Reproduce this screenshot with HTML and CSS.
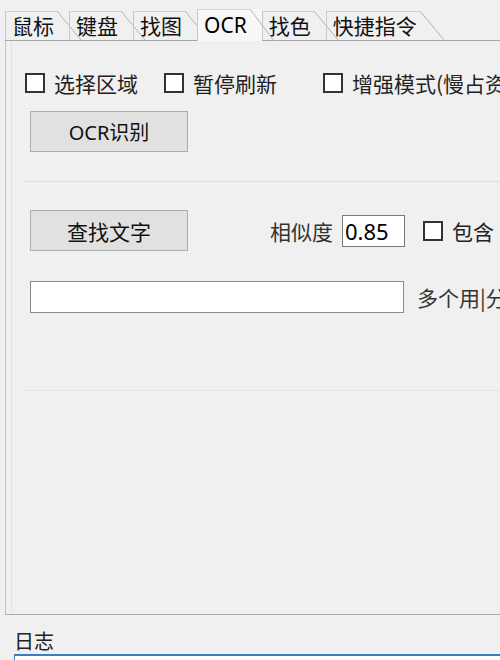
FILE: index.html
```html
<!DOCTYPE html>
<html lang="zh-CN">
<head>
  <meta charset="UTF-8" />
  <title>OCR</title>
  <link rel="stylesheet" href="styles.css">
</head>
<body>
  <div class="window">
    <div class="tabs">
      <div class="tab">鼠标</div>
      <div class="tab">键盘</div>
      <div class="tab">找图</div>
      <div class="tab active">OCR</div>
      <div class="tab">找色</div>
      <div class="tab">快捷指令</div>
    </div>

    <div class="panel">
      <div class="inner">
        <div class="check-row">
          <label class="check"><span class="box"></span>选择区域</label>
          <label class="check gap1"><span class="box"></span>暂停刷新</label>
          <label class="check gap2"><span class="box"></span>增强模式(慢占资源)</label>
        </div>

        <button class="btn btn-ocr">OCR识别</button>

        <div class="section">
          <div class="find-row">
            <button class="btn">查找文字</button>
            <span class="label sim">相似度</span>
            <input class="num" type="text" value="0.85">
            <label class="check contain"><span class="box"></span>包含</label>
          </div>
          <div class="entry-row">
            <input class="entry" type="text">
            <span class="label hint">多个用|分隔</span>
          </div>
        </div>
      </div>
    </div>

    <div class="log-title">日志</div>
    <div class="log"></div>
  </div>
</body>
</html>
```

FILE: styles.css
```css
body {
  margin: 0;
  background: #f0f0f0;
  font-family: "Noto Sans CJK SC", "Noto Sans", sans-serif;
  color: #222;
  overflow: hidden;
}

.window {
  width: 640px;
  height: 660px;
  padding-left: 5px;
  padding-top: 8px;
  box-sizing: border-box;
}

/* tab strip */
.tabs {
  display: flex;
  align-items: flex-end;
  height: 32px;
  border-bottom: 1px solid #a6a6a6;
}

.tab {
  position: relative;
  height: 29px;
  line-height: 29px;
  padding: 0 15px 0 6px;
  font-size: 21px;
  color: #111;
  border-left: 1px solid #c9c9c9;
  background: linear-gradient(#cdcdcd, #cdcdcd) top left / calc(100% - 12px) 1px no-repeat;
}

.tab::after {
  content: "";
  position: absolute;
  top: 0;
  left: calc(100% - 12px);
  width: 24px;
  height: 29px;
  background: linear-gradient(to top right, transparent calc(50% - 0.8px), #b4b4b4 50%, transparent calc(50% + 0.8px));
}

.tab.active {
  height: 32px;
  line-height: 33px;
  margin-bottom: -1px;
  z-index: 2;
  font-family: "Noto Sans", sans-serif;
  color: #000;
  background: linear-gradient(#d6d6d6, #d6d6d6) top left / calc(100% - 12px) 1px no-repeat, #f7f7f7;
}

.tab.active::after {
  height: 32px;
}

/* page frame */
.panel {
  height: 573px;
  border-left: 1px solid #c4c4c4;
  border-bottom: 1px solid #acacac;
}

.inner {
  height: 100%;
  margin-left: 5px;
  border-left: 1px solid #e2e2e2;
  padding: 30px 0 0 13px;
  box-sizing: border-box;
}

.check-row {
  display: flex;
  align-items: center;
  height: 24px;
}

.check {
  display: flex;
  align-items: center;
  font-size: 21px;
  white-space: nowrap;
  color: #222;
}

.box {
  width: 16px;
  height: 16px;
  border: 2px solid #333;
  background: #fff;
  margin-right: 9px;
}

.gap1 { margin-left: 26px; }
.gap2 { margin-left: 46px; }

.btn {
  display: block;
  width: 158px;
  height: 41px;
  margin-left: 5px;
  background: #e1e1e1;
  border: 1px solid #adadad;
  font-family: "Noto Sans", "Noto Sans CJK SC", sans-serif;
  font-size: 20px;
  color: #111;
  padding: 0;
}

.btn-ocr {
  margin-top: 16px;
}

.section {
  margin-top: 29px;
  margin-left: -1px;
  height: 210px;
  border-top: 1px solid #dedede;
  border-bottom: 1px solid #e4e4e4;
  padding-top: 28px;
  box-sizing: border-box;
}

.find-row {
  display: flex;
  align-items: center;
  height: 41px;
  padding-left: 1px;
}

.find-row .btn {
  margin-left: 5px;
  font-size: 21px;
}

.label {
  font-size: 21px;
  color: #333;
  white-space: nowrap;
}

.sim {
  margin-left: 82px;
}

.num {
  width: 63px;
  height: 32px;
  box-sizing: border-box;
  margin-left: 9px;
  border: 1px solid #7a7a7a;
  background: #fff;
  font-family: "Noto Sans", sans-serif;
  font-size: 22px;
  padding: 0 2px;
  color: #000;
}

.contain {
  margin-left: 18px;
}

.entry-row {
  display: flex;
  align-items: center;
  margin-top: 30px;
  padding-left: 6px;
}

.entry {
  width: 374px;
  height: 32px;
  box-sizing: border-box;
  border: 1px solid #8a8a8a;
  background: #fff;
}

.hint {
  margin-left: 13px;
}

.log-title {
  font-size: 20px;
  color: #222;
  margin: 12px 0 0 9px;
  height: 27px;
  line-height: 27px;
}

.log {
  margin-left: 9px;
  height: 40px;
  border-top: 2px solid #3a7dc2;
  border-left: 1px solid #3a7dc2;
  background: #fff;
}
```
